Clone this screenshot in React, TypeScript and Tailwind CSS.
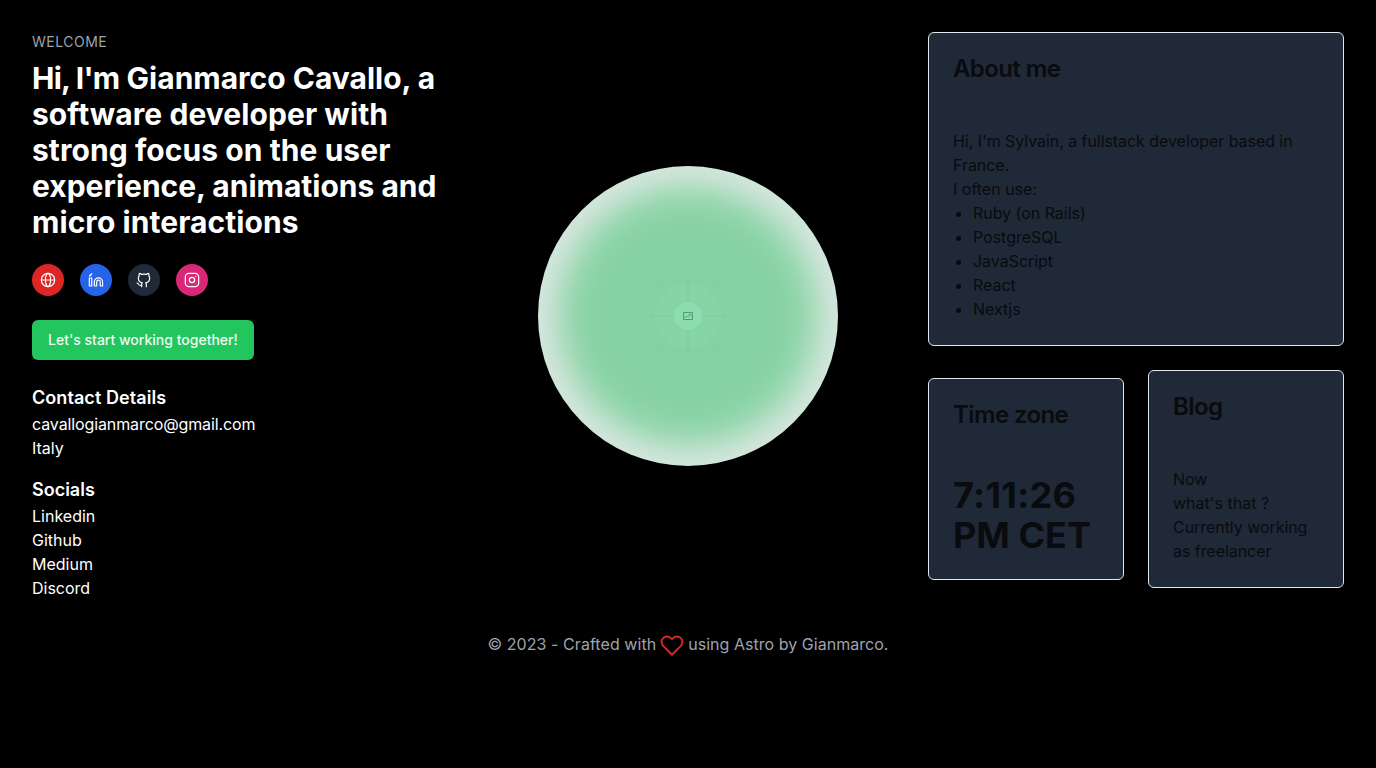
import type { ReactNode } from "react";

const socials = ["Linkedin", "Github", "Medium", "Discord"];
const stack = ["Ruby (on Rails)", "PostgreSQL", "JavaScript", "React", "Nextjs"];

function Icon({ children }: { children: ReactNode }) {
  return (
    <svg
      width="16"
      height="16"
      viewBox="0 0 24 24"
      fill="none"
      stroke="currentColor"
      strokeWidth="1.8"
      strokeLinecap="round"
      strokeLinejoin="round"
    >
      {children}
    </svg>
  );
}

function Card({ title, children }: { title: string; children: ReactNode }) {
  return (
    <section className="rounded-md border border-[#e2e8f0] bg-[#1f2937] text-[#090b0e]">
      <header className="p-6">
        <h2 className="text-2xl leading-none font-semibold tracking-tight">{title}</h2>
      </header>
      <div className="p-6">{children}</div>
    </section>
  );
}

function Globe() {
  return (
    <div className="size-[300px] rounded-full bg-[radial-gradient(circle_closest-side_at_center,#84d1a2_0%,#84d1a2_48%,#88d2a5_62%,#8fd5aa_71%,#9cd8b3_78%,#b2dec3_86%,#c6e2d2_93%,#d2e6db_100%)]">
      <svg width="300" height="300" viewBox="0 0 300 300" fill="none">
        <circle cx="150" cy="150" r="33.5" fill="#87d5a6" />
        <g stroke="#7dcb9c" strokeWidth="1">
          <path d="M150 114v22M150 164v22M113 150h23M164 150h23" />
          <path d="m119 119 21 21M181 119l-21 21M119 181l21-21M181 181l-21-21" opacity=".8" />
        </g>
        <circle cx="150" cy="150" r="14" fill="#8ddeae" />
        <g stroke="#559774" strokeWidth="1">
          <path d="M145.5 146.5h9v7h-9z" />
          <path d="M146 151h2l1-1 2 1M151 150v-1.5h2v2" strokeWidth=".8" />
        </g>
      </svg>
    </div>
  );
}

export default function App() {
  return (
    <div className="min-h-screen bg-black font-['Inter',sans-serif] text-base text-white">
      <main className="grid grid-cols-3 items-center gap-8 px-8 pt-8">
        <div>
          <p className="text-sm tracking-[0.5px] text-[#9ca3af] uppercase">Welcome</p>
          <h1 className="mt-2 text-3xl font-bold">
            <span className="tracking-[-0.75px]">Hi, I'm</span> Gianmarco Cavallo, a{" "}
            <span className="tracking-[0.07px]">software developer with strong focus on the user</span> experience,
            animations and <span className="tracking-[0.07px]">micro interactions</span>
          </h1>
          <div className="mt-6 flex gap-4">
            <a className="grid size-8 place-items-center rounded-full bg-[#dc2626]">
              <Icon>
                <circle cx="12" cy="12" r="10" />
                <path d="M13 2.05S16 6 16 12s-3 9.95-3 9.95M11 21.95S8 18 8 12s3-9.95 3-9.95M2.5 12h19" />
              </Icon>
            </a>
            <a className="grid size-8 place-items-center rounded-full bg-[#2563eb]">
              <Icon>
                <path d="M2 21V9h3.6V21ZM2.2 6 5.6 2.4M4.3 5.4h.01M9.5 21v-6a6.2 6.2 0 0 1 12.4 0v6h-3.5v-6a2.7 2.7 0 0 0-5.4 0v6Z" />
              </Icon>
            </a>
            <a className="grid size-8 place-items-center rounded-full bg-[#1f2937]">
              <Icon>
                <path d="M15.5 22v-3.2a4 4 0 0 0-.9-2.6c3-.35 5.9-1.5 5.9-6.7A5.3 5.3 0 0 0 19.2 5.8a5 5 0 0 0-.1-3.6s-1.1-.35-3.7 1.4a13 13 0 0 0-6.8 0C6 1.85 4.9 2.2 4.9 2.2a5 5 0 0 0-.1 3.6A5.3 5.3 0 0 0 3.5 9.5c0 5.2 2.9 6.35 5.9 6.7a4 4 0 0 0-.9 2.6V22M8.5 20c-3 1-4-.5-5-2-.6-.9-1.3-1.3-2-1.5" />
              </Icon>
            </a>
            <a className="grid size-8 place-items-center rounded-full bg-[#db2777]">
              <Icon>
                <path d="M12 16a4 4 0 1 0 0-8 4 4 0 0 0 0 8Z" />
                <rect x="2" y="2" width="20" height="20" rx="5.5" />
                <path d="m17.5 6.51.01-.01" />
              </Icon>
            </a>
          </div>
          <button className="mt-6 block h-10 rounded-md bg-[#22c55e] px-4 text-sm font-medium text-[#eefcf3]">
            Let's start working together!
          </button>
          <h3 className="mt-6 text-lg font-semibold tracking-[0.07px]">Contact Details</h3>
          <p className="tracking-[-0.11px]">cavallogianmarco@gmail.com</p>
          <p>Italy</p>
          <h3 className="mt-4 text-lg font-semibold">Socials</h3>
          <ul>
            {socials.map((name) => (
              <li key={name}>{name}</li>
            ))}
          </ul>
        </div>

        <div className="flex justify-center">
          <Globe />
        </div>

        <div className="flex flex-col gap-6 self-start">
          <Card title="About me">
            <p className="tracking-[-0.055px]">Hi, I'm Sylvain, a fullstack developer based in France.</p>
            <p>I often use:</p>
            <ul className="ml-5 list-disc tracking-[-0.03px]">
              {stack.map((name) => (
                <li key={name}>{name}</li>
              ))}
            </ul>
          </Card>
          <div className="grid grid-cols-2 items-center gap-6">
            <Card title="Time zone">
              <p className="text-4xl font-bold">
                <span className="tracking-[0.35px]">7:11:26</span> PM CET
              </p>
            </Card>
            <Card title="Blog">
              <p>Now</p>
              <p>what's that ?</p>
              <p className="tracking-[-0.05px]">Currently working as freelancer</p>
            </Card>
          </div>
        </div>
      </main>
      <footer className="mt-8 flex items-center justify-center gap-1 text-[#9ca3af]">
        <span className="tracking-[0.06px]">© 2023 - Crafted with</span>
        <svg
          width="24"
          height="24"
          viewBox="0 0 24 24"
          fill="none"
          stroke="#dc2626"
          strokeWidth="1.9"
          strokeLinejoin="round"
          className="translate-y-[1.5px]"
        >
          <path d="M20.84 4.61a5.5 5.5 0 0 0-7.78 0L12 5.67l-1.06-1.06a5.5 5.5 0 0 0-7.78 7.78L12 21.23l8.84-8.84a5.5 5.5 0 0 0 0-7.78Z" />
        </svg>
        <span className="tracking-[0.03px]">using Astro by Gianmarco.</span>
      </footer>
    </div>
  );
}
